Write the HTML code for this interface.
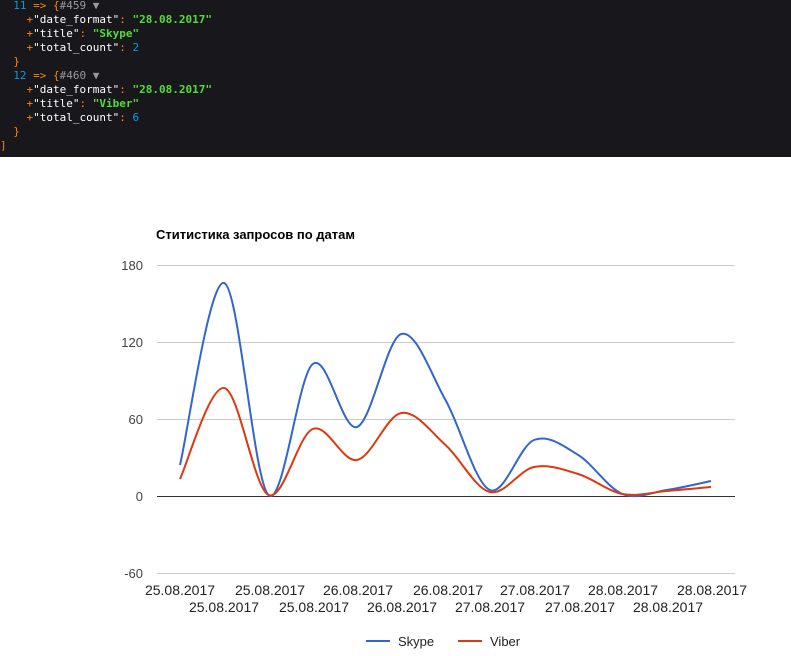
<!DOCTYPE html>
<html><head><meta charset="utf-8"><style>
body{margin:0;width:791px;height:656px;background:#fff;overflow:hidden;font-family:"Liberation Sans",sans-serif}
#dump{position:absolute;left:0;top:0;width:791px;height:157px;background:#18171b;font-family:"DejaVu Sans Mono","Liberation Mono",monospace;font-size:11px;line-height:14px;color:#bbb;white-space:pre}
#dump div{height:14px}
.n{color:#1299da}.o{color:#ff8400}.s{color:#56db3a;font-weight:bold}.k{color:#fff}.g{color:#999}
</style></head><body>
<div id="dump"><div style="margin-top:-1px"><span class="n">  11</span> <span class="o">=&gt;</span> <span class="o">{</span><span class="g">#459 ▼</span></div><div>    <span class="o">+</span><span class="k">"date_format"</span><span class="o">:</span> <span class="s">"28.08.2017"</span></div><div>    <span class="o">+</span><span class="k">"title"</span><span class="o">:</span> <span class="s">"Skype"</span></div><div>    <span class="o">+</span><span class="k">"total_count"</span><span class="o">:</span> <span class="n">2</span></div><div class="o">  }</div><div><span class="n">  12</span> <span class="o">=&gt;</span> <span class="o">{</span><span class="g">#460 ▼</span></div><div>    <span class="o">+</span><span class="k">"date_format"</span><span class="o">:</span> <span class="s">"28.08.2017"</span></div><div>    <span class="o">+</span><span class="k">"title"</span><span class="o">:</span> <span class="s">"Viber"</span></div><div>    <span class="o">+</span><span class="k">"total_count"</span><span class="o">:</span> <span class="n">6</span></div><div class="o">  }</div><div class="o">]</div></div>
<svg width="791" height="656" style="position:absolute;left:0;top:0" font-family="Liberation Sans, sans-serif">
<text x="156" y="239" font-size="13" font-weight="bold" fill="#000">Ститистика запросов по датам</text>
<g stroke="#ccc" stroke-width="1">
<line x1="157" x2="735" y1="265.5" y2="265.5"/><line x1="157" x2="735" y1="342.5" y2="342.5"/><line x1="157" x2="735" y1="419.5" y2="419.5"/><line x1="157" x2="735" y1="573.5" y2="573.5"/></g>
<line x1="157" x2="735" y1="496.5" y2="496.5" stroke="#333"/>
<g font-size="13" fill="#444" text-anchor="end">
<text x="143" y="270">180</text><text x="143" y="347">120</text><text x="143" y="424">60</text><text x="143" y="501">0</text><text x="143" y="578">-60</text></g>
<g font-size="14" fill="#222" text-anchor="middle">
<text x="180" y="595">25.08.2017</text><text x="270" y="595">25.08.2017</text><text x="358" y="595">26.08.2017</text><text x="448" y="595">26.08.2017</text><text x="535" y="595">27.08.2017</text><text x="623" y="595">28.08.2017</text><text x="712" y="595">28.08.2017</text>
<text x="224" y="612">25.08.2017</text><text x="314" y="612">25.08.2017</text><text x="402" y="612">26.08.2017</text><text x="490" y="612">27.08.2017</text><text x="580" y="612">27.08.2017</text><text x="668" y="612">28.08.2017</text></g>
<path id="sk" fill="none" stroke="#3366cc" stroke-width="2"/>
<path id="vb" fill="none" stroke="#dc3912" stroke-width="2"/>
<line x1="366" x2="390" y1="641" y2="641" stroke="#3366cc" stroke-width="2"/>
<text x="398" y="646" font-size="13" fill="#222">Skype</text>
<line x1="458" x2="482" y1="641" y2="641" stroke="#dc3912" stroke-width="2"/>
<text x="490" y="646" font-size="13" fill="#222">Viber</text>
</svg>
<script>
function p(ys){var xs=[];for(var i=0;i<ys.length;i++)xs.push(180+i*44.25);
var d="M"+xs[0]+","+ys[0];
for(var i=0;i<ys.length-1;i++){var x0=xs[i-1]||xs[i],y0=i>0?ys[i-1]:ys[i],x3=xs[i+2]||xs[i+1],y3=i+2<ys.length?ys[i+2]:ys[i+1];
var t=1/6;d+=" C"+(xs[i]+(xs[i+1]-x0)*t)+","+(ys[i]+(ys[i+1]-y0)*t)+" "+(xs[i+1]-(x3-xs[i])*t)+","+(ys[i+1]-(y3-ys[i])*t)+" "+xs[i+1]+","+ys[i+1];}
return d;}
document.getElementById("sk").setAttribute("d",p([465,283,495,364,427,334,400,490,440,455,494,490,481]));
document.getElementById("vb").setAttribute("d",p([479,388,495,429,460,413,445,492,467,474,494,491,487]));
</script>
</body></html>
